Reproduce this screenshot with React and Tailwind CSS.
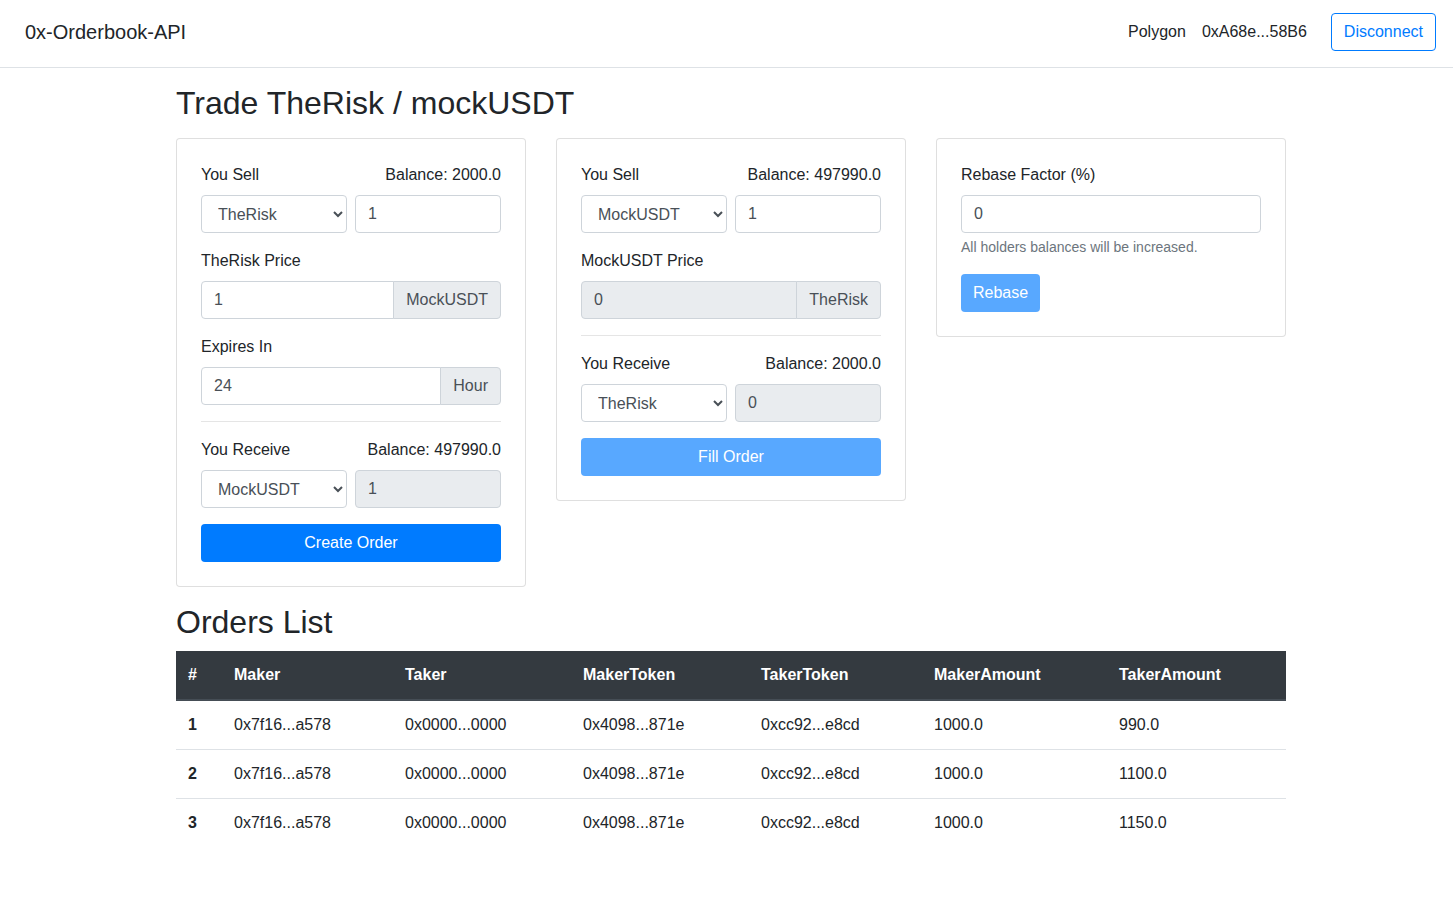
import React from 'react';

const font = { fontFamily: '"Liberation Sans", Arial, sans-serif' };

/* ---------- form bits ---------- */
function Label({ left, right }) {
  return (
    <div className="flex justify-between mb-2 leading-6 text-[#212529]">
      <span>{left}</span>
      {right && <span>{right}</span>}
    </div>
  );
}

function Select({ value, options }) {
  return (
    <select
      defaultValue={value}
      className="h-[38px] w-full px-3 border border-[#ced4da] rounded bg-white text-[#495057] text-base"
      style={font}
    >
      {options.map((o) => (
        <option key={o}>{o}</option>
      ))}
    </select>
  );
}

function Input({ value, disabled }) {
  return (
    <input
      defaultValue={value}
      disabled={disabled}
      className={`h-[38px] w-full px-3 border border-[#ced4da] rounded text-[#495057] text-base outline-none ${
        disabled ? 'bg-[#e9ecef]' : 'bg-white'
      }`}
      style={font}
    />
  );
}

function InputGroup({ value, addon, disabled }) {
  return (
    <div className="flex h-[38px]">
      <input
        defaultValue={value}
        disabled={disabled}
        className={`flex-1 min-w-0 px-3 border border-[#ced4da] rounded-l text-[#495057] text-base outline-none ${
          disabled ? 'bg-[#e9ecef]' : 'bg-white'
        }`}
        style={font}
      />
      <span className="flex items-center px-3 -ml-px border border-[#ced4da] rounded-r bg-[#e9ecef] text-[#495057]">
        {addon}
      </span>
    </div>
  );
}

function Button({ children, disabled, className = '' }) {
  return (
    <button
      disabled={disabled}
      className={`h-[38px] px-3 rounded bg-[#007bff] text-white text-base ${disabled ? 'opacity-65' : ''} ${className}`}
      style={font}
    >
      {children}
    </button>
  );
}

const Card = ({ children }) => (
  <div className="border border-black/[.125] rounded p-6 bg-white">{children}</div>
);

const Hr = () => <div className="border-t border-black/10 my-4" />;

const tokens = ['TheRisk', 'MockUSDT'];

const orders = [
  ['1', '0x7f16...a578', '0x0000...0000', '0x4098...871e', '0xcc92...e8cd', '1000.0', '990.0'],
  ['2', '0x7f16...a578', '0x0000...0000', '0x4098...871e', '0xcc92...e8cd', '1000.0', '1100.0'],
  ['3', '0x7f16...a578', '0x0000...0000', '0x4098...871e', '0xcc92...e8cd', '1000.0', '1150.0'],
];
const cols = ['#', 'Maker', 'Taker', 'MakerToken', 'TakerToken', 'MakerAmount', 'TakerAmount'];
const widths = ['w-[46px]', 'w-[171px]', 'w-[178px]', 'w-[178px]', 'w-[173px]', 'w-[185px]', 'w-[179px]'];

export default function App() {
  return (
    <div className="min-h-screen bg-white text-[#212529] text-base" style={font}>
      {/* ── Navbar ── */}
      <nav className="h-[68px] pb-[3px] flex items-center justify-between pl-[25px] pr-[17px] border-b border-[#dee2e6]">
        <span className="text-xl">0x-Orderbook-API</span>
        <div className="flex items-center">
          <span>Polygon</span>
          <span className="ml-4">0xA68e...58B6</span>
          <button
            className="ml-6 h-[38px] px-3 border border-[#007bff] rounded text-[#007bff] text-base"
            style={font}
          >
            Disconnect
          </button>
        </div>
      </nav>

      <main className="ml-[176px] w-[1110px]">
        <h2 className="text-[32px] leading-[38px] mt-[16px] mb-[16px]">Trade TheRisk / mockUSDT</h2>

        <div className="grid grid-cols-3 gap-[30px] items-start">
          {/* Create order */}
          <Card>
            <Label left="You Sell" right="Balance: 2000.0" />
            <div className="grid grid-cols-2 gap-2">
              <Select value="TheRisk" options={tokens} />
              <Input value="1" />
            </div>
            <div className="mt-4">
              <Label left="TheRisk Price" />
              <InputGroup value="1" addon="MockUSDT" />
            </div>
            <div className="mt-4">
              <Label left="Expires In" />
              <InputGroup value="24" addon="Hour" />
            </div>
            <Hr />
            <Label left="You Receive" right="Balance: 497990.0" />
            <div className="grid grid-cols-2 gap-2">
              <Select value="MockUSDT" options={tokens} />
              <Input value="1" disabled />
            </div>
            <Button className="w-full mt-4">Create Order</Button>
          </Card>

          {/* Fill order */}
          <Card>
            <Label left="You Sell" right="Balance: 497990.0" />
            <div className="grid grid-cols-2 gap-2">
              <Select value="MockUSDT" options={tokens} />
              <Input value="1" />
            </div>
            <div className="mt-4">
              <Label left="MockUSDT Price" />
              <InputGroup value="0" addon="TheRisk" disabled />
            </div>
            <Hr />
            <Label left="You Receive" right="Balance: 2000.0" />
            <div className="grid grid-cols-2 gap-2">
              <Select value="TheRisk" options={tokens} />
              <Input value="0" disabled />
            </div>
            <Button className="w-full mt-4" disabled>
              Fill Order
            </Button>
          </Card>

          {/* Rebase */}
          <Card>
            <Label left="Rebase Factor (%)" />
            <Input value="0" />
            <p className="mt-1 text-sm leading-[21px] text-[#6c757d]">All holders balances will be increased.</p>
            <Button className="mt-4" disabled>
              Rebase
            </Button>
          </Card>
        </div>

        {/* ── Orders ── */}
        <h2 className="text-[32px] leading-[38px] mt-4 mb-[10px]">Orders List</h2>
        <table className="w-full table-fixed border-collapse">
          <thead>
            <tr className="bg-[#343a40] text-white">
              {cols.map((c, i) => (
                <th
                  key={c}
                  className={`${widths[i]} text-left font-bold px-3 py-3 leading-6 border-b-2 border-[#454d55]`}
                >
                  {c}
                </th>
              ))}
            </tr>
          </thead>
          <tbody>
            {orders.map((row) => (
              <tr key={row[0]} className="border-t border-[#dee2e6]">
                {row.map((cell, i) => (
                  <td key={i} className={`px-3 py-3 leading-6 ${i === 0 ? 'font-bold' : ''}`}>
                    {cell}
                  </td>
                ))}
              </tr>
            ))}
          </tbody>
        </table>
      </main>
    </div>
  );
}
